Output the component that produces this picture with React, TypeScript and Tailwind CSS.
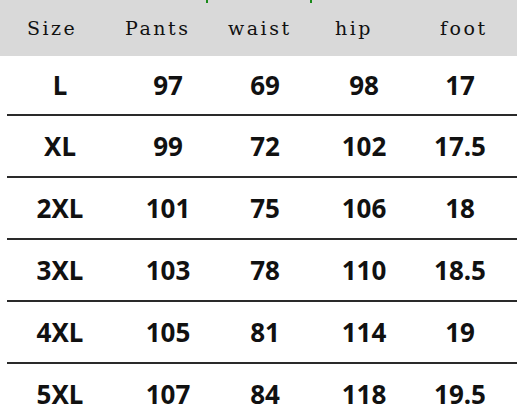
const rows = [
  ["L", "97", "69", "98", "17"],
  ["XL", "99", "72", "102", "17.5"],
  ["2XL", "101", "75", "106", "18"],
  ["3XL", "103", "78", "110", "18.5"],
  ["4XL", "105", "81", "114", "19"],
  ["5XL", "107", "84", "118", "19.5"],
];

const headers = ["Size", "Pants", "waist", "hip", "foot"];

export default function App() {
  return (
    <div className="w-[517px] h-[414px] overflow-hidden bg-white">
      {/* Header */}
      <div
        className="relative h-[56px] bg-[#d9d9d9] grid grid-cols-[98px_103px_107px_105px_1fr] items-center pl-[27px] text-[19px] tracking-[2.5px] text-[#111]"
        style={{ fontFamily: '"DejaVu Serif", serif' }}
      >
        {headers.map((h) => (
          <span key={h} className="leading-none">
            {h}
          </span>
        ))}
        <span className="absolute left-[206px] top-0 w-[2px] h-[3px] bg-[#1a8a1a]" />
        <span className="absolute left-[310px] top-0 w-[2px] h-[3px] bg-[#1a8a1a]" />
      </div>

      {/* Body */}
      <div
        className="ml-[7px] font-bold text-[26px] text-[#111]"
        style={{ fontFamily: '"Noto Sans", sans-serif' }}
      >
        {rows.map((r, i) => (
          <div
            key={r[0]}
            className={`grid grid-cols-[106px_110px_84px_114px_78px] items-center text-center border-b-2 border-[#2a2a2a] ${
              i === 0 ? "h-[60px]" : "h-[62px]"
            }`}
          >
            {r.map((c, j) => (
              <span key={j} className="leading-none">
                {c}
              </span>
            ))}
          </div>
        ))}
      </div>
    </div>
  );
}
